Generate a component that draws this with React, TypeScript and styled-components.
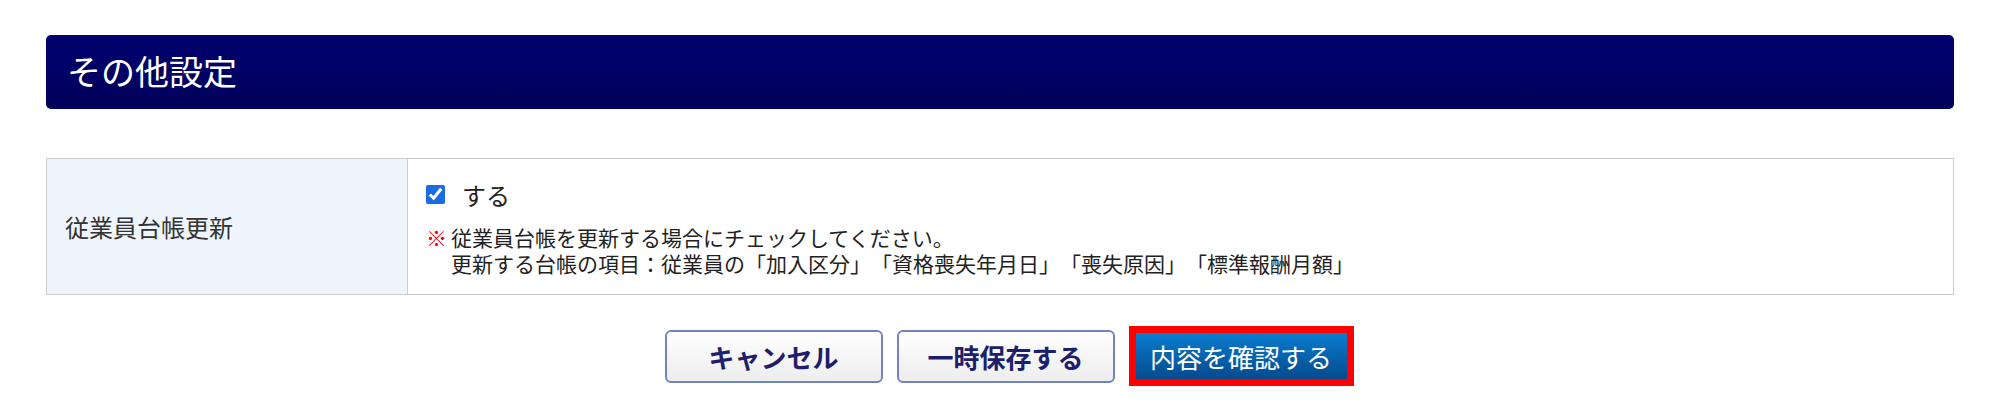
import React from "react";
import styled, { createGlobalStyle } from "styled-components";

const GlobalStyle = createGlobalStyle`
  body {
    margin: 0;
    background: #fff;
    font-family: "Noto Sans CJK JP", "Noto Sans", sans-serif;
    color: #222;
    text-spacing-trim: space-all;
  }
`;

const Page = styled.div`
  padding: 35px 46px 30px;
`;

const SectionHeader = styled.div`
  height: 74px;
  display: flex;
  align-items: center;
  padding: 0 0 4px 21px;
  box-sizing: border-box;
  border-radius: 5px;
  background: linear-gradient(#000070, #00005a);
`;

const SectionTitle = styled.h2`
  margin: 0;
  font-size: 34px;
  font-weight: 400;
  color: #fff;
`;

const SettingsTable = styled.div`
  margin-top: 49px;
  display: grid;
  grid-template-columns: 361px 1fr;
  border: 1px solid #cccccc;
`;

const LabelCell = styled.div`
  display: flex;
  align-items: center;
  padding: 0 18px;
  background: #eef5fc;
  border-right: 1px solid #cccccc;
  font-size: 24px;
  color: #333;
`;

const ValueCell = styled.div`
  padding: 17px 18px 18px;
`;

const CheckRow = styled.label`
  display: flex;
  align-items: center;
  gap: 17px;
  height: 36px;
  font-size: 24px;
  color: #222;
`;

const CheckBox = styled.input`
  width: 19px;
  height: 19px;
  margin: 0;
  accent-color: #1a6be3;
`;

const Note = styled.p`
  margin: 12px 0 0;
  font-size: 21px;
  line-height: 26px;
  color: #222;
`;

const NoteLine = styled.span<{ $indent?: boolean }>`
  display: block;
  padding-left: ${(p) => (p.$indent ? "25px" : "0")};
`;

const Mark = styled.span`
  color: #f00000;
  font-weight: 700;
  margin-right: 4px;
`;

const ButtonRow = styled.div`
  margin-top: 31px;
  display: flex;
  justify-content: center;
  align-items: center;
  gap: 14px;
  padding-left: 18px;
`;

const PlainButton = styled.button`
  width: 218px;
  height: 53px;
  border: 2px solid #7381c6;
  border-radius: 6px;
  background: linear-gradient(#ffffff, #ededed);
  font-family: inherit;
  font-size: 26px;
  font-weight: 700;
  color: #1d1f6c;
  cursor: pointer;
`;

const Highlight = styled.div`
  border: 7px solid #ff0000;
  display: flex;
`;

const ConfirmButton = styled.button`
  width: 211px;
  height: 46px;
  border: none;
  background: linear-gradient(#0a7dd0, #044a8c);
  font-family: inherit;
  font-size: 26px;
  font-weight: 400;
  color: #fff;
  padding: 0;
  cursor: pointer;
`;

export default function App() {
  return (
    <>
      <GlobalStyle />
      <Page>
        <SectionHeader>
          <SectionTitle>その他設定</SectionTitle>
        </SectionHeader>

        <SettingsTable>
          <LabelCell>従業員台帳更新</LabelCell>
          <ValueCell>
            <CheckRow>
              <CheckBox type="checkbox" defaultChecked />
              する
            </CheckRow>
            <Note>
              <NoteLine>
                <Mark>※</Mark>従業員台帳を更新する場合にチェックしてください。
              </NoteLine>
              <NoteLine $indent>
                更新する台帳の項目：従業員の「加入区分」「資格喪失年月日」「喪失原因」「標準報酬月額」
              </NoteLine>
            </Note>
          </ValueCell>
        </SettingsTable>

        <ButtonRow>
          <PlainButton type="button">キャンセル</PlainButton>
          <PlainButton type="button">一時保存する</PlainButton>
          <Highlight>
            <ConfirmButton type="button">内容を確認する</ConfirmButton>
          </Highlight>
        </ButtonRow>
      </Page>
    </>
  );
}
